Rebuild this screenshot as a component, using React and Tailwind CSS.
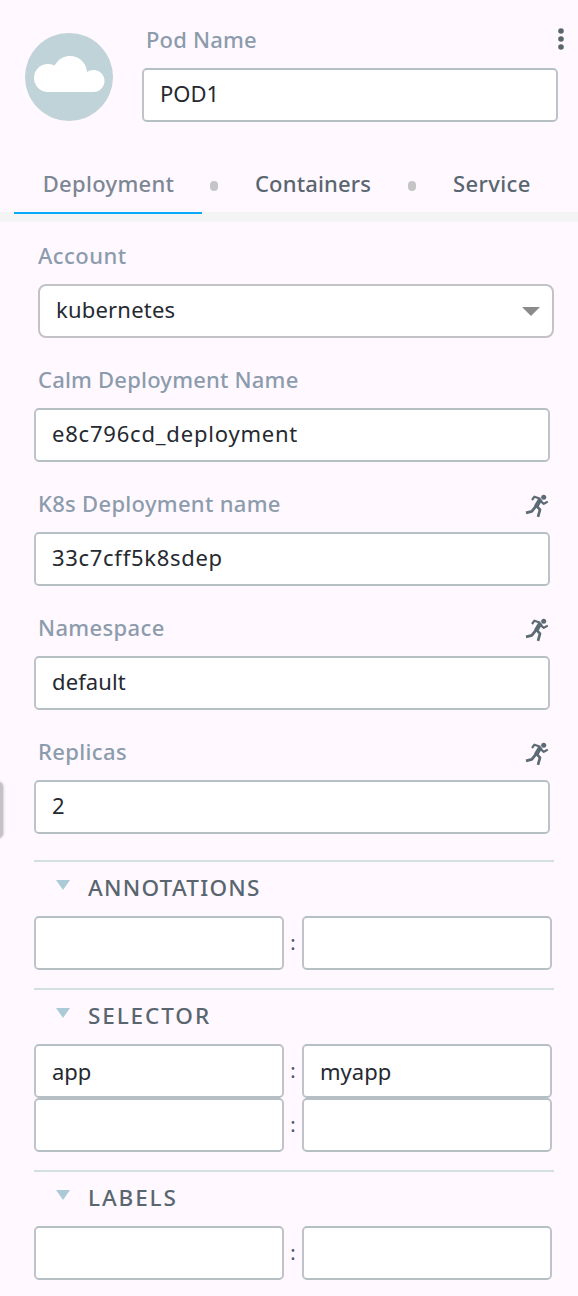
import React from "react";

function CloudBadge() {
  return (
    <svg className="h-[88px] w-[88px] shrink-0" viewBox="0 0 88 88">
      <circle cx="44" cy="44" r="44" fill="#c0d3d8" />
      <g fill="#fff">
        <circle cx="23" cy="45" r="14" />
        <circle cx="45" cy="40" r="17" />
        <circle cx="68.5" cy="48" r="11" />
        <rect x="22" y="44" width="47" height="15" />
      </g>
    </svg>
  );
}

function RunnerIcon() {
  return (
    <svg className="mt-[3px] h-6 w-6" viewBox="0 0 24 24" fill="none" stroke="#5c6b73" strokeLinejoin="round">
      <circle cx="18.7" cy="3.2" r="2.5" fill="#5c6b73" stroke="none" />
      <path d="M7 6 9.4 2.7 15.4 4.8" strokeWidth="2.2" />
      <path d="M15.6 4.8 11 12.6" strokeWidth="4.4" />
      <path d="M16 7.4 18.8 9.8 22.8 7.6" strokeWidth="2.2" />
      <path d="M11.4 11.6 6.8 17.4 1 18.8" strokeWidth="2.8" />
      <path d="M11.6 12 15 15.6 13 22.8" strokeWidth="2.7" />
    </svg>
  );
}

function Triangle({ className }) {
  return (
    <svg className={className} viewBox="0 0 18 10" preserveAspectRatio="none">
      <path d="M0 0H18L9 10Z" fill="currentColor" />
    </svg>
  );
}

function Box({ value, className = "", textClass = "" }) {
  return (
    <div className={`flex h-[54px] items-center rounded-[5px] border-2 border-x-[#c1c3cb] border-y-[#b6bfc3] bg-white pl-4 ${className}`}>
      <span className={`whitespace-pre text-[#252930] ${textClass}`}>{value}</span>
    </div>
  );
}

function Field({ label, labelClass, value, textClass = "", dynamic }) {
  return (
    <div className="mb-[26px]">
      <div className="mb-3 flex h-8 items-center justify-between pr-[5px] pl-1 font-medium text-[#8c9cac]">
        <span className={`pb-0.5 ${labelClass}`}>{label}</span>
        {dynamic && <RunnerIcon />}
      </div>
      <Box value={value} textClass={`pb-[5px] ${textClass}`} className="w-[516px]" />
    </div>
  );
}

function PairRow({ name = "", value = "" }) {
  return (
    <div className="flex">
      <Box value={name} className="w-[250px]" />
      <span className="flex w-[18px] items-center justify-center text-[20px] text-[#4a5566]">:</span>
      <Box value={value} className="w-[250px]" />
    </div>
  );
}

function Section({ title, titleClass, rows }) {
  return (
    <section className="mb-[18px] border-t-2 border-[#d2e0e2]">
      <div className="mb-0.5 flex h-[52px] items-center pl-[22px] text-[#59666f]">
        <Triangle className="mr-[18px] mb-[6px] h-[10px] w-[14px] text-[#a9cad6]" />
        <h2 className={`text-[22.5px] font-medium ${titleClass}`}>{title}</h2>
      </div>
      {rows.map((row, i) => (
        <PairRow key={i} {...row} />
      ))}
    </section>
  );
}

function Dot() {
  return <span className="mt-[6px] h-[10px] w-2 rounded-full bg-[#c5c5c6]" />;
}

export default function App() {
  return (
    <main className="relative h-[1296px] w-[578px] overflow-hidden bg-[#fff8ff] font-['Noto_Sans',sans-serif] text-[22px] leading-8">
      <header className="flex h-[154px] pl-[25px]">
        <div className="mt-[33px] mr-[29px]">
          <CloudBadge />
        </div>
        <div className="mt-6 w-[416px]">
          <div className="mb-3 flex h-8 items-center justify-between pl-1 font-medium text-[#8c9cac]">
            <span className="pb-0.5 tracking-[0.2px]">Pod Name</span>
            <svg className="-mr-[6px] h-6 w-[6px] shrink-0" viewBox="0 0 6 24" fill="#59666d">
              <circle cx="3" cy="3" r="2.8" />
              <circle cx="3" cy="11" r="2.8" />
              <circle cx="3" cy="19" r="2.8" />
            </svg>
          </div>
          <Box value="POD1" textClass="pb-[5px]" />
        </div>
      </header>
      <nav className="flex h-[68px] border-b-[10px] border-[#f4f4f4] pl-[14px] font-medium text-[#59666f]">
        <div className="relative flex h-[58px] w-[188px] items-center justify-center text-[#7c8794]">
          <span className="pl-px tracking-[0.3px]">Deployment</span>
          <span className="absolute top-[58px] left-0 h-[2px] w-full bg-[#0aa8f8]" />
        </div>
        <div className="ml-2 flex h-[58px] items-center">
          <Dot />
          <span className="ml-[37px] w-[116px] whitespace-nowrap tracking-[0.15px]">Containers</span>
          <span className="ml-[37px] flex"><Dot /></span>
          <span className="ml-[37px] tracking-[0.4px]">Service</span>
        </div>
      </nav>
      <div className="w-[554px] pt-[18px] pl-[34px]">
        <div className="mb-[26px] pl-1">
          <div className="mb-3 flex h-8 items-center font-medium text-[#8c9cac]">
            <span className="pb-0.5 tracking-[0.45px]">Account</span>
          </div>
          <div className="flex h-[54px] items-center justify-between rounded-[8px] border-2 border-[#c3c3c5] bg-white pr-3 pl-4 text-[#252930]">
            <span className="pb-[5px] tracking-[0.2px]">kubernetes</span>
            <Triangle className="h-[9px] w-[18px] text-[#8b8b8b]" />
          </div>
        </div>
        <Field label="Calm Deployment Name" labelClass="tracking-[0.2px]" value="e8c796cd_deployment" textClass="tracking-[0.8px]" />
        <Field label="K8s Deployment name" labelClass="tracking-[0.3px]" value="33c7cff5k8sdep" textClass="tracking-[0.7px]" dynamic />
        <Field label="Namespace" labelClass="tracking-[0.35px]" value="default" textClass="tracking-[0.1px]" dynamic />
        <Field label="Replicas" labelClass="tracking-[0.35px]" value="2" dynamic />
        <Section title="ANNOTATIONS" titleClass="pb-px tracking-[1.25px]" rows={[{}]} />
        <Section title="SELECTOR" titleClass="pb-px tracking-[1.9px]" rows={[{ name: "app", value: "myapp" }, {}]} />
        <Section title="LABELS" titleClass="pb-px tracking-[1.9px]" rows={[{}]} />
      </div>
      <span className="absolute top-[782px] -left-2 h-14 w-[11px] rounded-[5px] bg-[#c4c2c5] shadow-[0_0_3px_#aaa]" />
    </main>
  );
}
